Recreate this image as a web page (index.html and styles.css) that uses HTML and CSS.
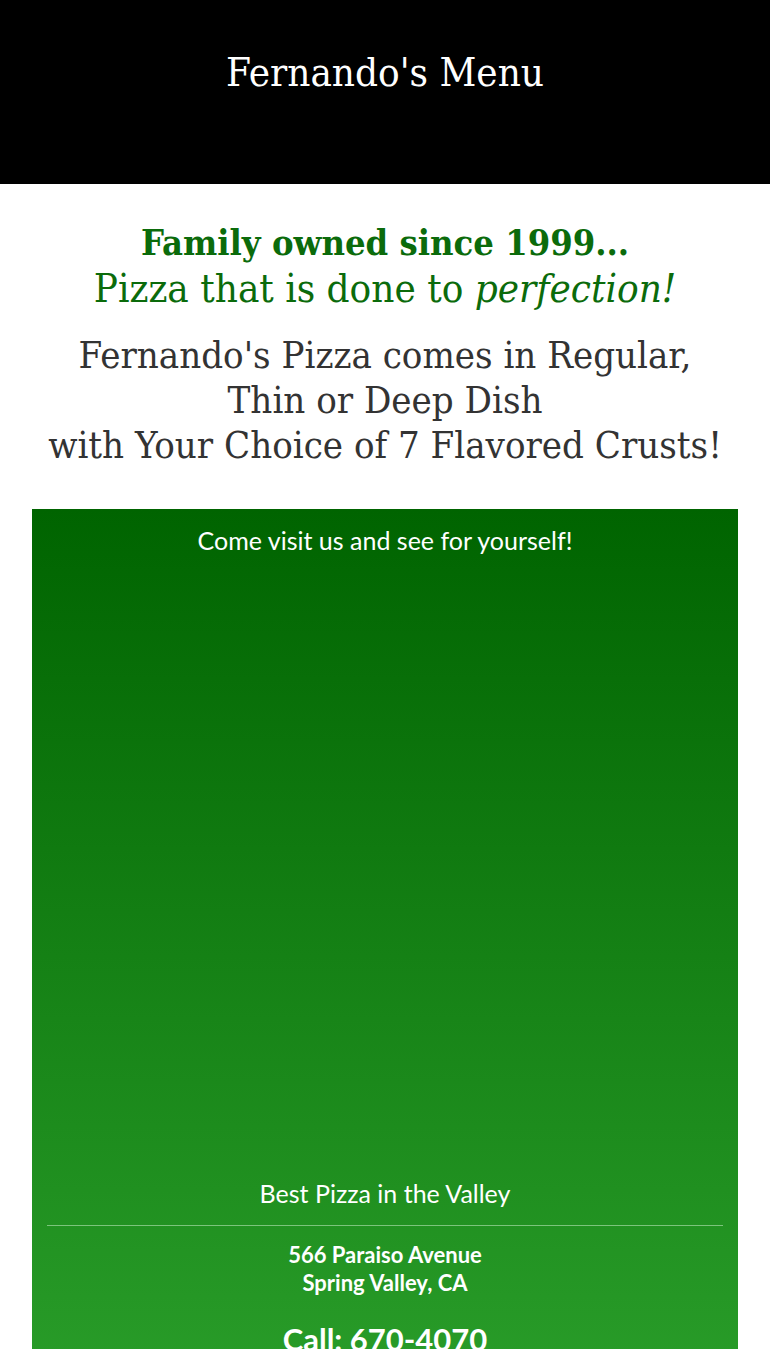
FILE: index.html
```html
<!DOCTYPE html>
<html lang="en">

<head>
  <meta charset="UTF-8" />
  <meta name="viewport" content="width=device-width, initial-scale=1" />
  <title>Fernando's Menu</title>
  <link rel="stylesheet" href="styles.css">
</head>

<body>
  <header class="banner">
    <h1>Fernando's Menu</h1>
  </header>

  <main>
    <section class="intro">
      <h2 class="tagline">
        <strong>Family owned since 1999...</strong><br>
        Pizza that is done to <em>perfection!</em>
      </h2>
      <p class="styles">
        Fernando's Pizza comes in Regular,<br>
        Thin or Deep Dish<br>
        with Your Choice of 7 Flavored Crusts!
      </p>
    </section>

    <section class="visit">
      <p class="visit-title">Come visit us and see for yourself!</p>
      <div class="visit-space"></div>
      <p class="visit-best">Best Pizza in the Valley</p>
      <hr>
      <p class="address">566 Paraiso Avenue<br>Spring Valley, CA</p>
      <p class="phone">Call: 670-4070</p>
    </section>
  </main>
</body>

</html>
```

FILE: styles.css
```css
* {
  box-sizing: border-box;
}

body {
  margin: 0;
  font-family: "DejaVu Serif Condensed", "DejaVu Serif", serif;
  background-color: #fff;
  color: #333;
}

.banner {
  background-color: #000;
  height: 184px;
  display: flex;
  justify-content: center;
  padding-top: 47px;
}

.banner h1 {
  margin: 0;
  color: #fff;
  font-weight: 400;
  font-size: 40px;
  line-height: 50px;
}

main {
  padding: 0 32px;
}

.intro {
  text-align: center;
  padding-top: 34px;
}

.tagline {
  margin: 0;
  color: #0b6b0b;
  font-weight: 400;
  font-size: 40px;
  line-height: 46px;
}

.tagline strong {
  font-weight: 700;
  font-size: 36px;
}

.styles {
  margin: 22px 0 0;
  font-size: 38px;
  line-height: 45px;
}

.visit {
  margin-top: 41px;
  background: linear-gradient(#006400, #289b28);
  color: #fff;
  text-align: center;
  font-family: "Lato", "Open Sans", sans-serif;
  padding: 14px 15px 0;
}

.visit p {
  margin: 0;
}

.visit-title {
  font-size: 25px;
  line-height: 34px;
}

.visit-space {
  height: 619px;
}

.visit-best {
  font-size: 25px;
  line-height: 34px;
}

.visit hr {
  border: none;
  border-top: 1px solid #7cc47c;
  margin: 15px 0;
}

.address {
  font-weight: 700;
  font-size: 22px;
  line-height: 28px;
}

.phone {
  margin-top: 22px !important;
  font-weight: 700;
  font-size: 31px;
  line-height: 40px;
}
```
